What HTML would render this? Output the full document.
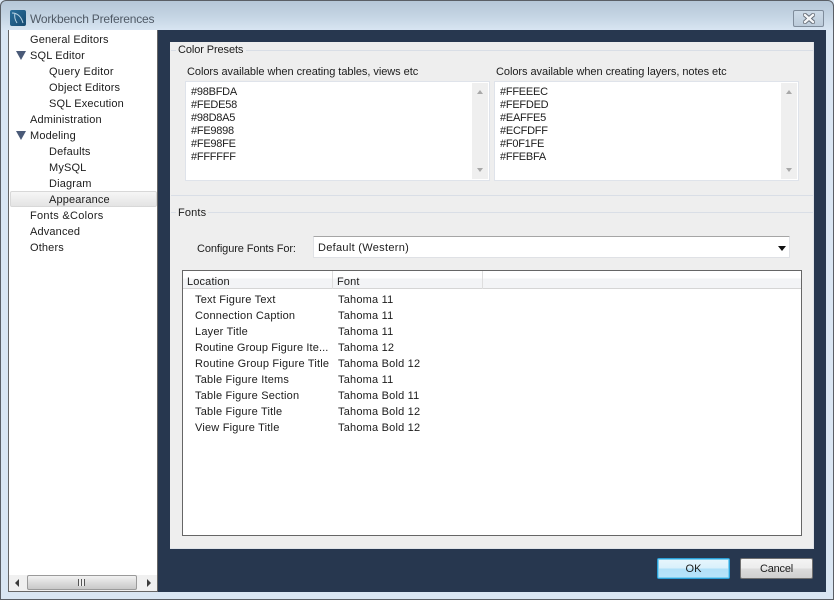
<!DOCTYPE html>
<html><head><meta charset="utf-8"><style>
html,body{margin:0;padding:0}
body{width:834px;height:600px;overflow:hidden;position:relative;background:#d9e6f3;font-family:"Liberation Sans",sans-serif;font-size:11px;color:#1c1c1c}
.a{position:absolute}
.t{position:absolute;white-space:nowrap;line-height:16px;height:16px;letter-spacing:.15px;margin-top:1px}
.ln{position:absolute;background:#d9dee6}
.list{position:absolute;background:#fff;border:1px solid #dfe3ea;box-sizing:border-box}
.sb{position:absolute;top:1px;bottom:1px;right:1px;width:16px;background:#efefef}
.up,.dn{position:absolute;left:5px;width:0;height:0;border-left:3.5px solid transparent;border-right:3.5px solid transparent}
.up{top:7px;border-bottom:4px solid #a8a8a8}
.dn{bottom:7px;border-top:4px solid #a8a8a8}
.tri{position:absolute;width:0;height:0;border-left:5px solid transparent;border-right:5px solid transparent;border-top:9px solid #4a5a78;left:16px}
.hex{letter-spacing:-.25px}
.c{letter-spacing:-.05px}
.r{letter-spacing:.2px}
</style></head><body>
<!-- title bar -->
<div class="a" style="left:0;top:0;width:834px;height:600px;box-sizing:border-box;border:1px solid #5a5f66;border-radius:6px 6px 0 0;background:linear-gradient(#b5c7d8 0,#c4d4e3 15px,#d9e6f3 30px)"></div>
<div class="a" style="left:10px;top:10px;width:16px;height:16px;border-radius:2px;background:linear-gradient(135deg,#2a6f9c,#174a70)">
<svg width="16" height="16" viewBox="0 0 16 16"><path d="M2 3C7 3 11 6 13 13M5 3C4 7 5 10 7 13" fill="none" stroke="#b8d3e4" stroke-width="1"/></svg></div>
<div class="t" style="left:30px;top:10px;font-size:12px;color:#505a66;letter-spacing:-.2px">Workbench Preferences</div>
<!-- close -->
<div class="a" style="left:793px;top:10px;width:31px;height:17px;box-sizing:border-box;border:1px solid #7f8c9b;border-radius:2px;background:linear-gradient(#cddbe8,#bccbda)">
<svg class="a" style="left:9px;top:2px" width="12" height="11" viewBox="0 0 12 11"><path d="M2 2L10 9M10 2L2 9" stroke="#5f6670" stroke-width="4.2" stroke-linecap="square"/><path d="M2 2L10 9M10 2L2 9" stroke="#f4f6f8" stroke-width="2.4" stroke-linecap="square"/></svg></div>
<!-- navy -->
<div class="a" style="left:158px;top:30px;width:668px;height:562px;background:#27374f"></div>
<!-- tree -->
<div class="a" style="left:8px;top:30px;width:150px;height:562px;box-sizing:border-box;background:#fff;border:1px solid #666;border-top:0"></div>
<div class="a" style="left:10px;top:191px;width:147px;height:16px;box-sizing:border-box;border:1px solid #d8d8d8;border-radius:2px;background:linear-gradient(#f6f6f6,#e4e4e4)"></div>
<div class="t" style="left:30px;top:31px">General Editors</div>
<div class="tri" style="top:51px"></div>
<div class="t" style="left:30px;top:47px">SQL Editor</div>
<div class="t" style="left:49px;top:63px;letter-spacing:.25px">Query Editor</div>
<div class="t" style="left:49px;top:79px">Object Editors</div>
<div class="t" style="left:49px;top:95px">SQL Execution</div>
<div class="t" style="left:30px;top:111px">Administration</div>
<div class="tri" style="top:131px"></div>
<div class="t" style="left:30px;top:127px">Modeling</div>
<div class="t" style="left:49px;top:143px">Defaults</div>
<div class="t" style="left:49px;top:159px">MySQL</div>
<div class="t" style="left:49px;top:175px">Diagram</div>
<div class="t" style="left:49px;top:191px">Appearance</div>
<div class="t" style="left:30px;top:207px;letter-spacing:.3px">Fonts &amp;Colors</div>
<div class="t" style="left:30px;top:223px">Advanced</div>
<div class="t" style="left:30px;top:239px">Others</div>
<!-- tree hscroll -->
<div class="a" style="left:9px;top:575px;width:148px;height:16px;background:#f0f0f0"></div>
<div class="a" style="left:15px;top:579px;width:0;height:0;border-top:4px solid transparent;border-bottom:4px solid transparent;border-right:4px solid #3c3c3c"></div>
<div class="a" style="left:147px;top:579px;width:0;height:0;border-top:4px solid transparent;border-bottom:4px solid transparent;border-left:4px solid #3c3c3c"></div>
<div class="a" style="left:27px;top:575px;width:110px;height:15px;box-sizing:border-box;border:1px solid #9a9a9a;border-radius:2px;background:linear-gradient(#f2f2f2,#dcdcdc 50%,#c8c8c8)"></div>
<div class="a" style="left:78px;top:579px;width:7px;height:7px;background:repeating-linear-gradient(90deg,#555 0,#555 1px,#eee 1px,#eee 3px)"></div>
<!-- panel -->
<div class="a" style="left:170px;top:42px;width:644px;height:507px;background:#eeeeee;border-right:1px solid #dfe3e8;border-bottom:1px solid #dfe3e8;box-sizing:border-box"></div>
<div class="ln" style="left:171px;top:50px;width:642px;height:1px"></div>
<div class="ln" style="left:171px;top:195px;width:642px;height:1px"></div>
<div class="ln" style="left:171px;top:212px;width:642px;height:1px"></div>
<div class="a" style="left:176px;top:43px;width:70px;height:14px;background:#eee"></div>
<div class="t" style="left:178px;top:41px;letter-spacing:-.1px">Color Presets</div>
<div class="a" style="left:176px;top:206px;width:32px;height:14px;background:#eee"></div>
<div class="t" style="left:178px;top:204px">Fonts</div>
<div class="t c" style="left:187px;top:63px">Colors available when creating tables, views etc</div>
<div class="t c" style="left:496px;top:63px">Colors available when creating layers, notes etc</div>
<!-- lists -->
<div class="list" style="left:185px;top:81px;width:305px;height:100px"><div class="sb"><div class="up"></div><div class="dn"></div></div></div>
<div class="list" style="left:494px;top:81px;width:305px;height:100px"><div class="sb"><div class="up"></div><div class="dn"></div></div></div>
<div class="t hex" style="left:191px;top:83px">#98BFDA</div>
<div class="t hex" style="left:191px;top:96px">#FEDE58</div>
<div class="t hex" style="left:191px;top:109px">#98D8A5</div>
<div class="t hex" style="left:191px;top:122px">#FE9898</div>
<div class="t hex" style="left:191px;top:135px">#FE98FE</div>
<div class="t hex" style="left:191px;top:148px">#FFFFFF</div>
<div class="t hex" style="left:500px;top:83px">#FFEEEC</div>
<div class="t hex" style="left:500px;top:96px">#FEFDED</div>
<div class="t hex" style="left:500px;top:109px">#EAFFE5</div>
<div class="t hex" style="left:500px;top:122px">#ECFDFF</div>
<div class="t hex" style="left:500px;top:135px">#F0F1FE</div>
<div class="t hex" style="left:500px;top:148px">#FFEBFA</div>
<!-- combo -->
<div class="t" style="left:197px;top:240px;letter-spacing:-.1px">Configure Fonts For:</div>
<div class="a" style="left:313px;top:236px;width:477px;height:22px;box-sizing:border-box;background:#fff;border:1px solid #dfe1e5;border-top-color:#a5a5a5;border-radius:1px"></div>
<div class="t" style="left:318px;top:239px;letter-spacing:.3px">Default (Western)</div>
<div class="a" style="left:778px;top:246px;width:0;height:0;border-left:4px solid transparent;border-right:4px solid transparent;border-top:5px solid #111"></div>
<!-- table -->
<div class="a" style="left:182px;top:270px;width:620px;height:266px;box-sizing:border-box;background:#fff;border:1px solid #666"></div>
<div class="a" style="left:183px;top:271px;width:618px;height:18px;box-sizing:border-box;background:linear-gradient(#fff 0,#fff 7px,#f3f4f6 8px,#f3f4f6);border-bottom:1px solid #d5d5d5"></div>
<div class="a" style="left:332px;top:271px;width:1px;height:18px;background:#dedede"></div>
<div class="a" style="left:482px;top:271px;width:1px;height:18px;background:#dedede"></div>
<div class="t" style="left:187px;top:273px">Location</div>
<div class="t" style="left:337px;top:273px">Font</div>
<div class="t r" style="left:195px;top:291px">Text Figure Text</div><div class="t r" style="left:338px;top:291px">Tahoma 11</div>
<div class="t r" style="left:195px;top:307px">Connection Caption</div><div class="t r" style="left:338px;top:307px">Tahoma 11</div>
<div class="t r" style="left:195px;top:323px">Layer Title</div><div class="t r" style="left:338px;top:323px">Tahoma 11</div>
<div class="t r" style="left:195px;top:339px;letter-spacing:.12px">Routine Group Figure Ite...</div><div class="t r" style="left:338px;top:339px">Tahoma 12</div>
<div class="t r" style="left:195px;top:355px">Routine Group Figure Title</div><div class="t r" style="left:338px;top:355px">Tahoma Bold 12</div>
<div class="t r" style="left:195px;top:371px">Table Figure Items</div><div class="t r" style="left:338px;top:371px">Tahoma 11</div>
<div class="t r" style="left:195px;top:387px">Table Figure Section</div><div class="t r" style="left:338px;top:387px">Tahoma Bold 11</div>
<div class="t r" style="left:195px;top:403px">Table Figure Title</div><div class="t r" style="left:338px;top:403px">Tahoma Bold 12</div>
<div class="t r" style="left:195px;top:419px">View Figure Title</div><div class="t r" style="left:338px;top:419px">Tahoma Bold 12</div>
<!-- buttons -->
<div class="a" style="left:657px;top:558px;width:73px;height:21px;box-sizing:border-box;border:1px solid #2ba0d8;border-radius:2px;background:linear-gradient(#e8f6fd 0,#d8f0fb 50%,#b0e0f8 51%,#b8e4fa);box-shadow:inset 0 0 0 1px #7fd0f2;text-align:center;line-height:20px;color:#1c1c1c">OK</div>
<div class="a" style="left:740px;top:558px;width:73px;height:21px;box-sizing:border-box;border:1px solid #707070;border-radius:2px;background:linear-gradient(#f4f4f4 0,#ececec 50%,#dcdcdc 51%,#d0d0d0);text-align:center;line-height:20px;color:#1c1c1c;letter-spacing:-.2px">Cancel</div>
</body></html>
